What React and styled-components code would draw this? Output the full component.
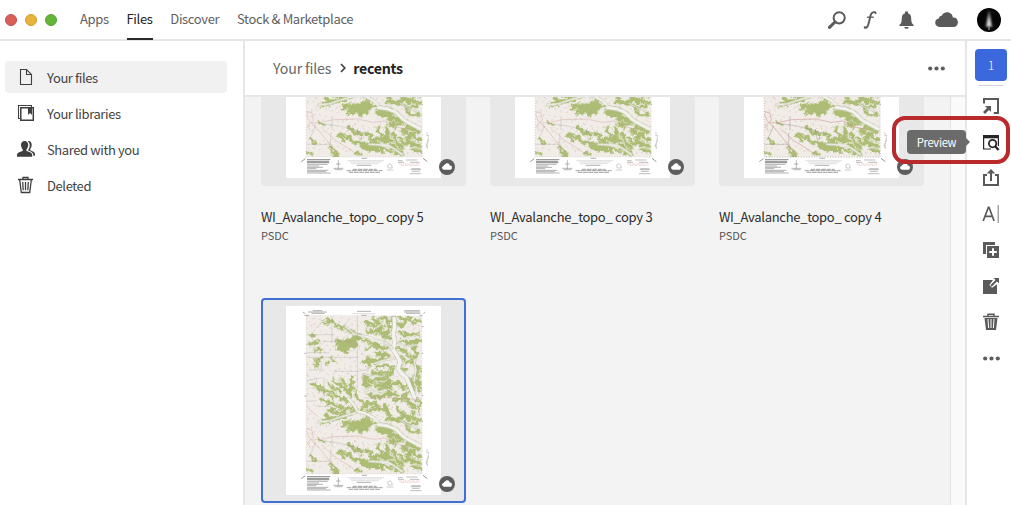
import React, { useState } from "react";
import styled, { createGlobalStyle } from "styled-components";

const GlobalStyle = createGlobalStyle`
  * { box-sizing: border-box; }
  html, body { margin: 0; overflow: hidden; background: #fff; }
  body {
    font-family: "Noto Sans CJK SC", "Open Sans", sans-serif;
    color: #444;
  }
  svg { display: block; }
`;

let Page = styled.div`
  display: flex;
  flex-direction: column;
  width: 100vw;
  height: 100vh;
  overflow: hidden;
`;

let TopBar = styled.header`
  display: flex;
  align-items: center;
  justify-content: space-between;
  flex: none;
  height: 41px;
  padding: 0 10px 0 5px;
  border-bottom: 2px solid #e6e6e6;
`;

let Lights = styled.div`
  display: flex;
  gap: 8px;
  margin-right: 23px;
`;

let Light = styled.span`
  width: 12px;
  height: 12px;
  border-radius: 50%;
  background: ${(props) => props.$bg};
  border: 1px solid ${(props) => props.$edge};
`;

let Nav = styled.nav`
  display: flex;
  align-items: center;
  height: 41px;
  align-self: flex-start;
`;

let NavItem = styled.a`
  height: 41px;
  line-height: 39px;
  font-size: 13px;
  letter-spacing: -0.35px;
  margin-right: 17.8px;
  color: ${(props) => (props.$active ? "#222" : "#606060")};
  border-bottom: 2px solid ${(props) => (props.$active ? "#2b2b2b" : "transparent")};
  white-space: nowrap;
`;

let Tools = styled.div`
  display: flex;
  align-items: center;
`;

let Tool = styled.div`
  margin-left: ${(props) => props.$gap}px;
`;

let Body = styled.div`
  display: flex;
  flex: 1;
  min-height: 0;
`;

let Sidebar = styled.aside`
  flex: none;
  width: 245px;
  padding: 20px 16px 0 5px;
  border-right: 2px solid #e6e6e6;
`;

let SideItem = styled.div`
  display: flex;
  align-items: center;
  height: 32px;
  margin-bottom: 4px;
  padding-left: 12px;
  border-radius: 4px;
  background: ${(props) => (props.$active ? "#f1f1f1" : "transparent")};
`;

let SideText = styled.span`
  margin-left: 12px;
  font-size: 13px;
  line-height: 20px;
  padding-top: 1px;
  letter-spacing: -0.4px;
`;

let Main = styled.main`
  display: flex;
  flex-direction: column;
  flex: 1;
  min-width: 0;
`;

let Crumbs = styled.div`
  display: flex;
  align-items: center;
  flex: none;
  height: 56px;
  padding: 0 20px 0 28px;
  border-bottom: 2px solid #e6e6e6;
  font-size: 14.2px;
  line-height: 20px;
  letter-spacing: -0.15px;
  color: #666;

  strong {
    color: #222;
    font-weight: 700;
    letter-spacing: -0.3px;
  }
  svg { margin: 0 7px 0 9px; }
  svg:last-child { margin: 0 0 0 auto; }
`;

let Scroller = styled.div`
  display: flex;
  flex: 1;
  min-height: 0;
  overflow: hidden;
  background: #f3f3f3;
`;

let Gutter = styled.div`
  flex: none;
  width: 15px;
  background: #fafafa;
  border-left: 1px solid #e3e3e3;
`;

/* the list is scrolled down, so the first row starts above the edge */
let Grid = styled.div`
  display: grid;
  flex: 1;
  grid-template-columns: repeat(3, 205px);
  grid-auto-rows: 317px;
  column-gap: 24px;
  margin-top: -116px;
  padding-left: 16px;
`;

let Thumb = styled.div`
  position: relative;
  display: flex;
  justify-content: center;
  align-items: center;
  height: 205px;
  border-radius: 4px;
  background: #e8e8e8;
  border: 2px solid ${(props) => (props.$selected ? "#4270d2" : "#e8e8e8")};
`;

let Badge = styled.span`
  position: absolute;
  right: 9px;
  bottom: 9px;
`;

let FileName = styled.div`
  margin-top: 21px;
  font-size: 13px;
  line-height: 20px;
  letter-spacing: -0.3px;
  color: #2c2c2c;
  white-space: nowrap;
`;

let FileType = styled.div`
  margin-top: -1px;
  font-size: 11px;
  line-height: 18px;
  letter-spacing: -0.1px;
  color: #555;
`;

let Rail = styled.aside`
  display: flex;
  flex-direction: column;
  align-items: center;
  flex: none;
  width: 46px;
  padding: 8px 0 0 4px;
  border-left: 2px solid #e6e6e6;
`;

let Count = styled.div`
  width: 32px;
  height: 32px;
  border-radius: 4px;
  background: #3c68dd;
  color: #fff;
  font-size: 12.5px;
  font-weight: 300;
  line-height: 32px;
  text-align: center;
`;

let Rule = styled.div`
  width: 24px;
  height: 1px;
  margin: 4px 0 2px;
  background: #d2d2d2;
`;

let RailButton = styled.div`
  position: relative;
  display: flex;
  align-items: center;
  justify-content: center;
  width: 36px;
  height: 36px;
`;

let Tip = styled.div`
  position: absolute;
  right: 43px;
  top: 6px;
  width: 59px;
  height: 24px;
  border-radius: 4px;
  background: #6b6b6b;
  color: #fff;
  font-size: 11.2px;
  line-height: 24px;
  letter-spacing: -0.3px;
  text-align: center;

  &::after {
    content: "";
    position: absolute;
    left: 59px;
    top: 8px;
    border: 4px solid transparent;
    border-left-color: #6b6b6b;
    border-right: 0;
  }
`;

let Highlight = styled.div`
  position: absolute;
  right: -1px;
  top: -8px;
  width: 118px;
  height: 48px;
  border: 4px solid #b92a2c;
  border-radius: 13px;
`;

// ---- map drawing ----

const woods = [
  // north
  [8, "M232 92 L262 104 L285 118 L308 124 L330 135"],
  [13, "M262 155 L285 160 L305 148 L330 144"],
  [22, "M278 172 L290 158 L312 160"],
  [9, "M285 188 L300 172 M262 176 L278 160"],
  [9, "M345 95 L372 108 L388 96 M352 122 L376 128 L398 112 M372 84 L380 100"],
  [10, "M385 125 L412 132 L420 112 L408 90 M400 140 L422 142"],
  [9, "M395 82 L425 95 L432 82 M448 82 L470 92 L452 108 L440 100"],
  [8, "M450 128 L472 138 L506 128 M478 84 L486 100 L510 92 M455 152 L488 160 L512 150"],
  [7, "M350 175 L376 168 L402 176 L422 172 M342 150 L364 158 L380 164"],
  [11, "M342 214 L362 208 L378 216 L402 200 M350 206 L358 228 M380 190 L412 196"],
  [7, "M438 176 L470 186 L482 204 L470 222 M446 196 L462 214 M452 232 L470 240"],
  [9, "M492 172 L500 190 L488 216 L508 236 L494 262 M504 262 L508 302"],
  [10, "M342 262 L360 274 L382 270 L404 264 L424 254 M372 286 L402 284 L418 274"],
  [12, "M344 268 L352 290 M392 298 L420 290 M422 286 L448 278 L460 292"],
  [8, "M380 232 L404 226 L430 232 M368 248 L394 252 L428 244 M480 264 L490 282 L486 306"],
  [9, "M356 314 L388 322 L414 310 L440 312 M430 334 L462 322 L476 338 L496 350"],
  [7, "M476 296 L472 312 L458 320 M498 328 L512 340 L508 366"],
  // west
  [7, "M182 132 L192 140 M178 158 L196 164 L202 156 M204 210 L216 204 M194 178 L212 180"],
  [5, "M218 98 L232 104 M196 214 L200 230 M246 208 L252 216 M228 224 L238 218"],
  [8, "M186 284 L204 290 L216 300 L240 306 L266 320 L296 334"],
  [8, "M250 272 L268 284 L286 296 L302 316 M274 266 L288 286 M302 264 L306 294 L294 304"],
  [6, "M234 282 L254 298 L270 300 M316 300 L322 326 L342 338 M238 316 L250 324"],
  [9, "M216 398 L240 384 L262 386 L290 376 L320 362 M236 362 L262 368 L282 364"],
  [8, "M228 374 L236 398 M256 348 L284 354 L306 356 M216 330 L240 338 L262 350"],
  [9, "M336 358 L352 340 L372 342 M352 362 L382 354 L404 362 M376 336 L384 352"],
  [11, "M278 406 L302 396 L328 398 L350 386 M292 420 L320 414 L352 412 M330 424 L366 398"],
  [14, "M300 404 L336 404 L362 392 M386 420 L410 424 L434 420"],
  [10, "M376 402 L396 412 L420 408 M404 348 L418 370 L412 388 M424 386 L446 392 L462 374 L482 388"],
  [8, "M440 352 L454 370 M460 396 L480 408 L502 398 M486 368 L494 388 L512 390 M470 414 L486 428 L508 424"],
  [11, "M398 428 L430 440 L452 436 M442 452 L462 446 M420 452 L434 460"],
  // south
  [9, "M456 472 L480 482 L508 478 M470 494 L492 490 L512 502 M448 494 L464 512 L492 514"],
  [11, "M468 462 L492 466 M478 506 L508 520 M492 532 L512 536"],
  [9, "M270 484 L292 492 L312 506 L336 516 L362 510 M296 466 L318 480 L338 488"],
  [10, "M334 518 L358 530 L392 528 L420 534 M372 504 L392 498 L414 492 M386 464 L392 490"],
  [9, "M408 462 L414 488 L402 506 M428 482 L436 506 L456 522 M350 480 L368 498 M432 542 L458 540"],
  [13, "M352 520 L382 520 M400 502 L420 506 M428 522 L446 534"],
  [5, "M182 500 L196 508 M174 540 L190 544 M240 520 L250 536 L264 544 M208 448 L222 452"],
  [7, "M268 492 L284 504 M318 540 L336 546 M246 540 L262 548"],
];

const valleys = [
  [11, "M432 84 L434 108 L430 130 L434 160 L428 176 L440 196 L450 214 L444 236 L454 250 L470 264 L480 288 L494 324"],
  [6, "M330 136 L352 140 L376 152 L404 158 L426 174"],
  [4, "M284 108 L312 130 L340 140 M404 156 L416 164"],
  [7, "M294 326 L310 342 L322 364 L346 370 L372 384 L388 402 L414 406"],
  [10, "M384 404 L414 408 L438 418 L460 440 L484 454 L512 468"],
  [5, "M206 396 L240 392 L276 380 L318 368 M356 514 L390 516 L416 518 L440 532 L458 546"],
  [4, "M492 208 L498 240 L492 272 M374 220 L402 210 L434 204 M346 300 L378 306 L410 300"],
  [3, "M444 158 L470 168 L500 164 M340 252 L366 258 L398 260 M450 390 L470 402 L500 414"],
];

const roads = [
  "M170 134 H246 M246 78 V154 H220 M170 188 H236 M170 202 H322 M322 78 V200 M202 112 L216 96",
  "M178 240 H222 M214 216 V238 M252 244 H322 L356 238 M170 272 L208 264 M222 264 V330",
  "M322 200 V298 M170 334 L198 332 M246 430 V470 M170 514 H242 M242 482 V516 M322 470 L330 510",
  "M212 452 L262 458 L310 470 L356 484 M198 348 L240 350 M178 500 L196 462 M250 154 H320",
];

const redLines = [
  "M170 346 L182 362 L202 378 M170 424 L178 444 L206 472 L228 500 L266 548",
  "M170 416 L186 420 L190 442 L172 458 L180 472 M186 450 L214 448 L250 440 L330 438",
  "M332 440 L370 448 L404 444 L440 462 L478 470 M224 472 L256 502 L292 524 L326 548",
  "M344 324 L398 322 L450 326 L516 328 M404 84 L440 76 M412 254 L412 320 M270 150 L330 170",
];

const ticks = [];
for (let i = 0; i < 520; i++) {
  // small scattered contour ticks
  const x = 172 + ((i * 73.7 + (i % 7) * 19) % 338);
  const y = 82 + ((i * 131.3 + (i % 11) * 7) % 464);
  const dx = ((i * 17) % 13) - 6;
  const dy = ((i * 29) % 11) - 5;
  ticks.push(`M${x.toFixed(1)} ${y.toFixed(1)} q${dx} ${dy} ${dy} ${dx}`);
}

function TopoMap() {
  return (
    <svg width="155" height="189" viewBox="108 48 465 567" style={{ flex: "none" }}>
      <defs>
        <filter id="rough" x="-5%" y="-5%" width="110%" height="110%" colorInterpolationFilters="sRGB">
          <feTurbulence type="fractalNoise" baseFrequency="0.075" numOctaves="2" seed="8" />
          <feDisplacementMap in="SourceGraphic" scale="24" xChannelSelector="R" yChannelSelector="G" />
          <feGaussianBlur stdDeviation="1.3" />
        </filter>
        <filter id="soft" x="-5%" y="-5%" width="110%" height="110%">
          <feGaussianBlur stdDeviation="0.9" />
        </filter>
        <clipPath id="sheet">
          <path d="M169 76 L515 78 L517 552 L168 552 Z" />
        </clipPath>
      </defs>
      <path fill="#fff" d="M108 48 H573 V615 H108 Z" />
      <g clipPath="url(#sheet)" fill="none" strokeLinecap="round" strokeLinejoin="round">
        <path fill="#f1ece7" d="M165 70 H520 V556 H165 Z" />
        <path d={ticks.join(" ")} stroke="#cdb9aa" strokeWidth="1.6" opacity="0.5" />
        <g filter="url(#rough)">
          {woods.map(([w, d]) => (
            <path key={d} d={d} stroke="#d3d9b5" strokeWidth={w + 6} />
          ))}
          {woods.map(([w, d]) => (
            <path key={d} d={d} stroke="#adbd75" strokeWidth={w + 0.5} />
          ))}
        </g>
        <path d={ticks.join(" ")} stroke="#a08f72" strokeWidth="1.6" opacity="0.16" />
        <g filter="url(#soft)">
          {valleys.map(([w, d]) => (
            <g key={d}>
              <path d={d} stroke="#9fa786" strokeWidth={w + 3} opacity="0.6" />
              <path d={d} stroke="#f5f3ef" strokeWidth={w} />
            </g>
          ))}
        </g>
        <path d={roads.join(" ")} stroke="#8d8889" strokeWidth="1.3" strokeDasharray="9 3" opacity="0.6" />
        <path d={redLines.join(" ")} stroke="#c99591" strokeWidth="1.8" opacity="0.6" />
      </g>
      <path d="M169 76 L515 78 L517 552 L168 552 Z" fill="none" stroke="#8b8580" strokeWidth="1.3" strokeDasharray="3 5" opacity="0.6" />
      <g fill="none" stroke="#727272" strokeWidth="2.2" opacity="0.75">
        <path d="M158 66 l8 5 M526 66 l-6 5 M163 76 h14 M508 76 h10" />
        <path d="M188 62 h29 M174 66 h57 M184 70 h40" />
        <path d="M321 64 h42 M334 76 h16" />
        <path d="M307 71 h70" strokeWidth="1.4" opacity="0.7" />
        <path d="M463 62 h47 M462 66 h49 M468 70 h42" />
        <path d="M154 566 L166 557 M519 556 L532 566" strokeWidth="3" />
        <path d="M163 190 h6 M163 318 h7 M515 110 h6 M515 190 h5 M515 316 h5 M515 394 h4" />
        <path d="M531 478 v12 M535 486 v22 M532 502 v26 M529 512 v12" strokeWidth="1.8" strokeDasharray="3 1" />
      </g>
      <g fill="none" stroke="#636363" strokeWidth="2" opacity="0.75">
        <path strokeWidth="3" d="M171 560 h70 M171 565 h66 M171 569 h67" />
        <path d="M171 574 h62 M171 579 h36 M171 583 h48 M171 587 h28 M171 592 h64 M171 596 h57 M171 600 h71" />
        <path d="M265 562 v26 M258 573 h14 M250 586 h30 M254 590 h24" strokeWidth="1.8" />
        <path d="M335 556 h16" />
        <path d="M292 563 h110 M300 567 h94 M304 572 h82" strokeWidth="1.2" opacity="0.7" />
        <path d="M320 577 h44" />
        <path d="M308 589 h72 M290 593 h108 M296 598 h96" strokeWidth="2.4" strokeDasharray="14 2" />
        <path d="M413 576 l8 -4 l4 5 l2 8 l-12 0 z M410 591 h20" strokeWidth="1.3" />
        <path d="M444 563 h14 M444 568 h18 M468 561 h34 M480 568 h28 M484 587 h27 M482 590 h31 M486 595 h23 M480 602 h34" strokeWidth="1.7" />
      </g>
      <path d="M446 573 H512 M452 577 H508" stroke="#cf9f9b" strokeWidth="1.5" opacity="0.8" strokeDasharray="10 3" />
    </svg>
  );
}

// ---- icons ----

const CloudShape = "M5.2 15 C2.3 15 0.2 13.2 0.2 10.7 C0.2 8.5 1.7 6.9 3.8 6.6 C4 4.9 5.2 3.9 6.7 3.8 C7.6 1.6 9.6 0.2 12.1 0.2 C15.3 0.2 17.7 2.5 17.8 5.6 C20.8 5.2 22.9 7.4 22.9 10.2 C22.9 12.9 21 15 18.4 15 Z";

const CloudBadge = () => (
  <svg width="16" height="16" viewBox="0 0 16 16">
    <circle cx="8" cy="8" r="8" fill="#5d5d5d" />
    <path d={CloudShape} fill="#fff" transform="translate(3 4.2) scale(.435)" />
  </svg>
);

const Dots = () => (
  <svg width="17" height="5" viewBox="0 0 17 5" fill="#5c5c5c">
    <circle cx="2.2" cy="2.5" r="2.1" />
    <circle cx="8.5" cy="2.5" r="2.1" />
    <circle cx="14.8" cy="2.5" r="2.1" />
  </svg>
);

const SideIcon = ({ children }) => (
  <svg width="18" height="18" viewBox="0 0 18 18" fill="none" stroke="#3f3f3f" strokeWidth="1.1">
    {children}
  </svg>
);

const RailIcon = ({ children }) => (
  <svg width="18" height="18" viewBox="0 0 18 18" fill="none" stroke="#5a5a5a" strokeWidth="2">
    {children}
  </svg>
);

const places = [
  {
    title: "Your files",
    icon: <path d="M3.5 1.5 H9.5 L14.5 6.5 V16.5 H3.5 Z M9.5 1.5 V6.5 H14.5" />,
  },
  {
    title: "Your libraries",
    icon: (
      <>
        <path d="M3.5 14.5 H1.5 V1.5 H14.5 V3.5" />
        <path d="M3.8 3.8 H16.3 V16.3 H3.8 Z" strokeWidth="1.5" />
        <path d="M11 4 H15 V11 L13 9 L11 11 Z" fill="#3f3f3f" stroke="none" />
      </>
    ),
  },
  {
    title: "Shared with you",
    icon: (
      <g fill="#3f3f3f" stroke="none">
        <path d="M7.6 1 C10 1 11.3 2.7 11.2 5.1 C11.1 7.1 10.4 8.6 9.5 9.5 V11 C12.3 12 15.2 12.5 15.2 15 V16.8 H0 V15 C0 12.5 2.9 12 5.7 11 V9.5 C4.8 8.6 4.1 7.1 4 5.1 C3.9 2.7 5.2 1 7.6 1 Z" />
        <path d="M10.7 1.2 C13.2 .7 14.8 2.4 14.7 4.9 C14.6 6.8 14 8 13.2 8.8 V10.2 C15.6 11.2 18 11.9 18 14 V15.8 H16.4 C16.5 12.5 14 11.5 11.2 10.4 V9.8 C13.4 7 13.2 3 10.7 1.2 Z" />
      </g>
    ),
  },
  {
    title: "Deleted",
    icon: (
      <>
        <path d="M1 3.5 H16 M6 3.2 V1.5 H11 V3.2 M2.7 4 L4.3 16.5 H12.7 L14.3 4" strokeWidth="1.3" />
        <path d="M5.7 6 L6.2 14.2 M8.5 6 V14.2 M11.3 6 L10.8 14.2" strokeWidth="1.3" />
      </>
    ),
  },
];

const actions = [
  {
    id: "open-in",
    icon: (
      <>
        <path d="M2 6.5 V2 H16 V16 H11.8" />
        <path d="M3 9 H9 V15 L7 13 L3 17 L1 15 L5 11 Z" fill="#5a5a5a" stroke="none" />
      </>
    ),
  },
  {
    id: "preview",
    icon: (
      <g stroke="#262626">
        <path d="M1 2 H17 V5.3 H1 Z" fill="#262626" stroke="none" />
        <path d="M1.6 4 V16 H9 M16.4 4 V13" strokeWidth="1.2" />
        <circle cx="10.6" cy="10.6" r="3.7" fill="#fff" strokeWidth="1.8" />
        <path d="M13.2 13.3 L16.6 17" strokeWidth="2.3" />
      </g>
    ),
  },
  {
    id: "share",
    icon: (
      <>
        <path d="M5 6 H2 V16 H16 V6 H13 M9 12 V4" />
        <path d="M9 0 L13.2 4.6 H4.8 Z" fill="#5a5a5a" stroke="none" />
      </>
    ),
  },
  {
    id: "rename",
    icon: (
      <>
        <path d="M1.2 16 L6.4 2.3 H7 L12.1 16 M3.1 11.3 H10.3" strokeWidth="1.7" />
        <path d="M16.2 0 V18" strokeWidth="1.2" stroke="#8d8d8d" />
      </>
    ),
  },
  {
    id: "duplicate",
    icon: (
      <g fill="#5a5a5a" stroke="none">
        <path d="M1 1 H13 V4 H4 V13 H1 Z" />
        <path d="M5 5 H17 V17 H5 Z" />
        <path d="M11 7.2 V14.8 M7.2 11 H14.8" stroke="#fff" strokeWidth="2" />
      </g>
    ),
  },
  {
    id: "open-new",
    icon: (
      <>
        <path d="M1 3 H11 L7.4 8 L10 10.7 L15 7.2 V17 H1 Z" fill="#5a5a5a" stroke="none" />
        <path d="M9 9 L15 3" stroke="#5a5a5a" strokeWidth="2" />
        <path d="M11.5 1 H17 V6.5 Z" fill="#5a5a5a" stroke="none" />
      </>
    ),
  },
  {
    id: "delete",
    icon: (
      <>
        <path d="M1 3.4 H17 M6 3 V1.2 H12 V3" strokeWidth="1.5" />
        <path d="M2.5 5 H15.5 L14 17 H4 Z" fill="#5a5a5a" stroke="none" />
        <path d="M6 6 L6.6 15 M9 6 V15 M12 6 L11.4 15" stroke="#fff" strokeWidth="1" />
      </>
    ),
  },
];

const files = [
  { id: 0, title: "WI_Avalanche_topo_ copy 5", type: "PSDC" },
  { id: 1, title: "WI_Avalanche_topo_ copy 3", type: "PSDC" },
  { id: 2, title: "WI_Avalanche_topo_ copy 4", type: "PSDC" },
  { id: 3 },
];

const App = () => {
  let [tab, setTab] = useState("Files");
  let [place, setPlace] = useState("Your files");
  let [selected, setSelected] = useState(3);

  return (
    <Page>
      <GlobalStyle />
      <TopBar>
        <Tools>
          <Lights>
            <Light $bg="#d9605a" $edge="#c4504a" />
            <Light $bg="#e9b43c" $edge="#d29d2c" />
            <Light $bg="#66b53b" $edge="#58a130" />
          </Lights>
          <Nav>
            {["Apps", "Files", "Discover", "Stock & Marketplace"].map((name) => (
              <NavItem key={name} $active={tab === name} onClick={() => setTab(name)}>
                {name}
              </NavItem>
            ))}
          </Nav>
        </Tools>
        <Tools>
          <Tool $gap={0}>
            <svg width="18" height="18" viewBox="0 0 18 18" fill="none" stroke="#5a5a5a">
              <circle cx="11.2" cy="6.8" r="5.6" strokeWidth="2" />
              <path d="M7 11 L1.5 16.4" strokeWidth="3" strokeLinecap="round" />
            </svg>
          </Tool>
          <Tool $gap={17}>
            <svg width="15" height="18" viewBox="0 0 15 18" fill="none" stroke="#5a5a5a">
              <path d="M1.5 16.6 C4 17.6 5.2 14.6 5.8 11.8 L7.4 5 C8 2.2 9.8 0.4 12.8 1.5" strokeWidth="1.9" />
              <path d="M3.9 6.2 H10.8" strokeWidth="1.3" />
              <circle cx="12.7" cy="1.9" r="1" fill="#5a5a5a" stroke="none" />
              <circle cx="1.7" cy="16.2" r="1" fill="#5a5a5a" stroke="none" />
            </svg>
          </Tool>
          <Tool $gap={21}>
            <svg width="15" height="18" viewBox="0 0 15 18" fill="#5a5a5a">
              <path d="M6 0.6 H9 V2.2 C11.2 2.8 12.2 4.6 12.2 7.2 C12.2 11 12.8 12.4 14.5 13.8 V15 H0.5 V13.8 C2.2 12.4 2.8 11 2.8 7.2 C2.8 4.6 3.8 2.8 6 2.2 Z" />
              <path d="M5.4 15.9 H9.6 C9.4 17.4 8.6 17.8 7.5 17.8 S5.6 17.4 5.4 15.9 Z" />
            </svg>
          </Tool>
          <Tool $gap={21}>
            <svg width="23" height="15" viewBox="0 0 23 15" fill="#5a5a5a">
              <path d={CloudShape} />
            </svg>
          </Tool>
          <Tool $gap={19}>
            <svg width="24" height="24" viewBox="0 0 24 24">
              <defs>
                <filter id="glow" x="-50%" width="200%">
                  <feGaussianBlur stdDeviation="0.8" />
                </filter>
              </defs>
              <circle cx="12" cy="12" r="12" fill="#050505" />
              <path d="M12 2 L13.4 9 L15.4 19 H8.6 L10.6 9 Z" fill="#8e8e8e" filter="url(#glow)" />
              <path d="M12 8 L13.6 18 H10.4 Z" fill="#f0f0f0" filter="url(#glow)" />
              <path d="M12 18 V22" stroke="#999" strokeWidth="1.2" />
            </svg>
          </Tool>
        </Tools>
      </TopBar>

      <Body>
        <Sidebar>
          {places.map((p) => (
            <SideItem
              key={p.title}
              $active={place === p.title}
              onClick={() => setPlace(p.title)}
            >
              <SideIcon>{p.icon}</SideIcon>
              <SideText>{p.title}</SideText>
            </SideItem>
          ))}
        </Sidebar>

        <Main>
          <Crumbs>
            <span>Your files</span>
            <svg width="6" height="10" viewBox="0 0 6 10" fill="none" stroke="#444" strokeWidth="1.7">
              <path d="M1 1 L4.8 5 L1 9" />
            </svg>
            <strong>recents</strong>
            <Dots />
          </Crumbs>
          <Scroller>
            <Grid>
              {files.map((f) => (
                <div key={f.id} onClick={() => setSelected(f.id)}>
                  <Thumb $selected={selected === f.id}>
                    <TopoMap />
                    <Badge>
                      <CloudBadge />
                    </Badge>
                  </Thumb>
                  {f.title ? (
                    <>
                      <FileName>{f.title}</FileName>
                      <FileType>{f.type}</FileType>
                    </>
                  ) : null}
                </div>
              ))}
            </Grid>
            <Gutter />
          </Scroller>
        </Main>

        <Rail>
          <Count>1</Count>
          <Rule />
          {actions.map((a) => (
            <RailButton key={a.id}>
              {a.id === "preview" ? (
                <>
                  <Highlight />
                  <Tip>Preview</Tip>
                </>
              ) : null}
              <RailIcon>{a.icon}</RailIcon>
            </RailButton>
          ))}
          <RailButton>
            <Dots />
          </RailButton>
        </Rail>
      </Body>
    </Page>
  );
};

export default App;
